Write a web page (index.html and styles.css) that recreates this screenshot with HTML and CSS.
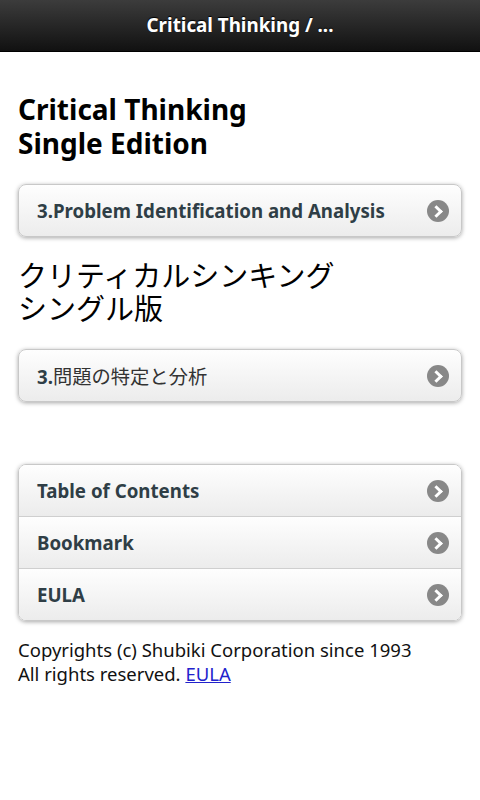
FILE: index.html
```html
<!DOCTYPE html>
<html lang="ja">
<head>
<meta charset="utf-8">
<title>Critical Thinking</title>
<link rel="stylesheet" href="styles.css">
</head>
<body>
<header class="topbar"><h1 class="topbar-title">Critical Thinking / ...</h1></header>
<main class="content">
  <h2 class="heading">Critical Thinking<br>Single Edition</h2>
  <a class="btn" href="#"><span class="btn-text">3.Problem Identification and Analysis</span><span class="arrow"></span></a>
  <h2 class="heading heading-ja">クリティカルシンキング<br>シングル版</h2>
  <a class="btn" href="#"><span class="btn-text">3.<span class="ja">問題の特定と分析</span></span><span class="arrow"></span></a>
  <ul class="list">
    <li><a class="list-item" href="#"><span class="btn-text">Table of Contents</span><span class="arrow"></span></a></li>
    <li><a class="list-item" href="#"><span class="btn-text">Bookmark</span><span class="arrow"></span></a></li>
    <li><a class="list-item" href="#"><span class="btn-text">EULA</span><span class="arrow"></span></a></li>
  </ul>
  <p class="footer">Copyrights (c) Shubiki Corporation since 1993<br>All rights reserved. <a href="#" class="link">EULA</a></p>
</main>
</body>
</html>
```
FILE: styles.css
```css
* { box-sizing: border-box; }
html, body { margin: 0; padding: 0; background: #fff; }
body {
  font-family: "Noto Sans", "Noto Sans CJK JP", sans-serif;
  color: #111;
  width: 480px;
}
.topbar {
  height: 52px;
  background: linear-gradient(#3c3c3c, #111 100%);
  border-bottom: 1px solid #000;
  display: flex;
  align-items: center;
  justify-content: center;
}
.topbar-title {
  margin: 0;
  color: #fff;
  font-size: 18.8px;
  font-weight: bold;
  text-shadow: 0 -1px 1px #000;
  padding-bottom: 1px;
}
.content {
  padding: 0 18px;
}
.heading {
  margin: 40px 0 24px;
  font-size: 28px;
  line-height: 34px;
  font-weight: bold;
  color: #000;
}
.heading-ja {
  margin: 21px 0 25px;
  font-weight: normal;
  font-family: "Noto Sans CJK JP", sans-serif;
  font-size: 29px;
  line-height: 33px;
}
.btn {
  display: flex;
  align-items: center;
  justify-content: space-between;
  height: 53px;
  padding: 0 12px 0 18px;
  border: 1px solid #c8c8c8;
  border-radius: 8px;
  background: linear-gradient(#fefefe, #ececec);
  box-shadow: 0 1px 4px rgba(0,0,0,0.35);
  text-decoration: none;
}
.btn-text {
  font-size: 18.7px;
  font-weight: bold;
  color: #2f3e46;
}
.ja {
  font-family: "Noto Sans CJK JP", sans-serif;
  font-weight: normal;
  font-size: 19.3px;
  color: #333;
}
.arrow {
  width: 22px;
  height: 22px;
  border-radius: 50%;
  background: #888;
  position: relative;
  flex: none;
}
.arrow::after {
  content: "";
  position: absolute;
  left: 5px;
  top: 7px;
  width: 6px;
  height: 6px;
  border-top: 3px solid #fff;
  border-right: 3px solid #fff;
  transform: rotate(45deg);
}
.list {
  list-style: none;
  margin: 62px 0 0;
  padding: 0;
  border: 1px solid #c8c8c8;
  border-radius: 8px;
  box-shadow: 0 1px 4px rgba(0,0,0,0.35);
  overflow: hidden;
}
.list li + li { border-top: 1px solid #cfcfcf; }
.list-item {
  display: flex;
  align-items: center;
  justify-content: space-between;
  height: 51px;
  padding: 0 12px 0 18px;
  background: linear-gradient(#fefefe, #ececec);
  text-decoration: none;
}
.footer {
  margin: 17px 0 0;
  font-size: 18.5px;
  line-height: 24px;
  color: #111;
}
.link { color: #2222cc; }
```
